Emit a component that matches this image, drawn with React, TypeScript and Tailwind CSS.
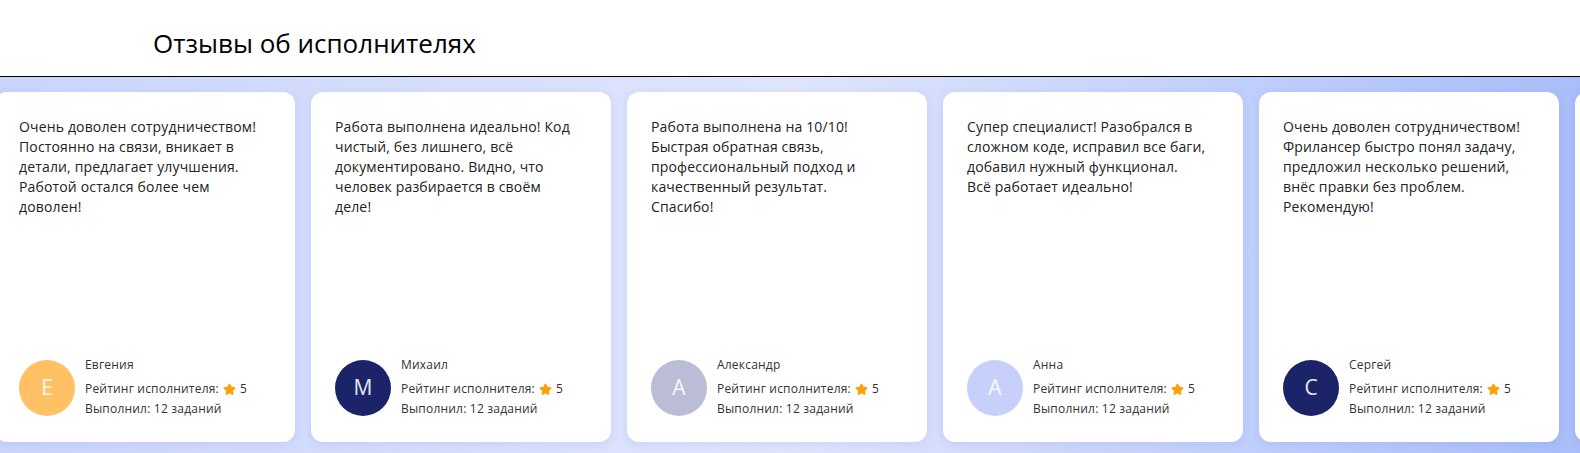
import { Star } from "lucide-react"

const reviews = [
  {
    lines: ["Очень доволен сотрудничеством!", "Постоянно на связи, вникает в", "детали, предлагает улучшения.", "Работой остался более чем", "доволен!"],
    name: "Евгения",
    letter: "Е",
    color: "bg-[#ffc163]",
  },
  {
    lines: ["Работа выполнена идеально! Код", "чистый, без лишнего, всё", "документировано. Видно, что", "человек разбирается в своём", "деле!"],
    name: "Михаил",
    letter: "М",
    color: "bg-[#1b2469]",
  },
  {
    lines: ["Работа выполнена на 10/10!", "Быстрая обратная связь,", "профессиональный подход и", "качественный результат.", "Спасибо!"],
    name: "Александр",
    letter: "А",
    color: "bg-[#babdd5]",
  },
  {
    lines: ["Супер специалист! Разобрался в", "сложном коде, исправил все баги,", "добавил нужный функционал.", "Всё работает идеально!"],
    name: "Анна",
    letter: "А",
    color: "bg-[#c6d0fb]",
  },
  {
    lines: ["Очень доволен сотрудничеством!", "Фрилансер быстро понял задачу,", "предложил несколько решений,", "внёс правки без проблем.", "Рекомендую!"],
    name: "Сергей",
    letter: "С",
    color: "bg-[#1b2469]",
  },
]

export default function App() {
  return (
    <div className="w-[1580px] h-[453px] overflow-hidden bg-white font-['Open_Sans',sans-serif]">
      {/* header */}
      <div className="h-[77px] border-b border-black flex items-center pl-[153px]">
        <h2 className="text-[26px] text-black mt-[10px]">Отзывы об исполнителях</h2>
      </div>

      {/* slider */}
      <div className="h-[376px] pt-[15px] bg-gradient-to-r from-[#cad5fd] via-[#e0e5fc] to-[#a9bdf9] overflow-hidden">
        <div className="flex gap-4 ml-[-5px]">
          {reviews.map((r, i) => (
            <div
              key={i}
              className="w-[300px] h-[350px] shrink-0 bg-white rounded-xl shadow-[0_2px_8px_rgba(80,100,200,0.12)] pt-[25px] px-6 pb-[23px] flex flex-col justify-between"
            >
              <p className="text-[14px] leading-5 text-[#222] tracking-[0.15px]">
                {r.lines.map((l, j) => (
                  <span key={j} className="block whitespace-nowrap">
                    {l}
                  </span>
                ))}
              </p>

              <div className="flex items-center gap-[10px]">
                <div className={`w-14 h-14 rounded-full ${r.color} flex items-center justify-center text-[21px] text-white/90`}>
                  {r.letter}
                </div>
                <div className="text-[12px] text-[#333] tracking-[0.2px]">
                  <div className="leading-4 mb-[6px]">{r.name}</div>
                  <div className="leading-5 flex items-center gap-1">
                    Рейтинг исполнителя:
                    <Star size={13} className="text-[#ff9f0a] fill-[#ff9f0a]" />
                    5
                  </div>
                  <div className="leading-5">Выполнил: 12 заданий</div>
                </div>
              </div>
            </div>
          ))}
          {/* next card, cut by the edge */}
          <div className="w-[300px] h-[350px] shrink-0 bg-white rounded-xl shadow-[0_2px_8px_rgba(80,100,200,0.12)]" />
        </div>
      </div>
    </div>
  )
}
